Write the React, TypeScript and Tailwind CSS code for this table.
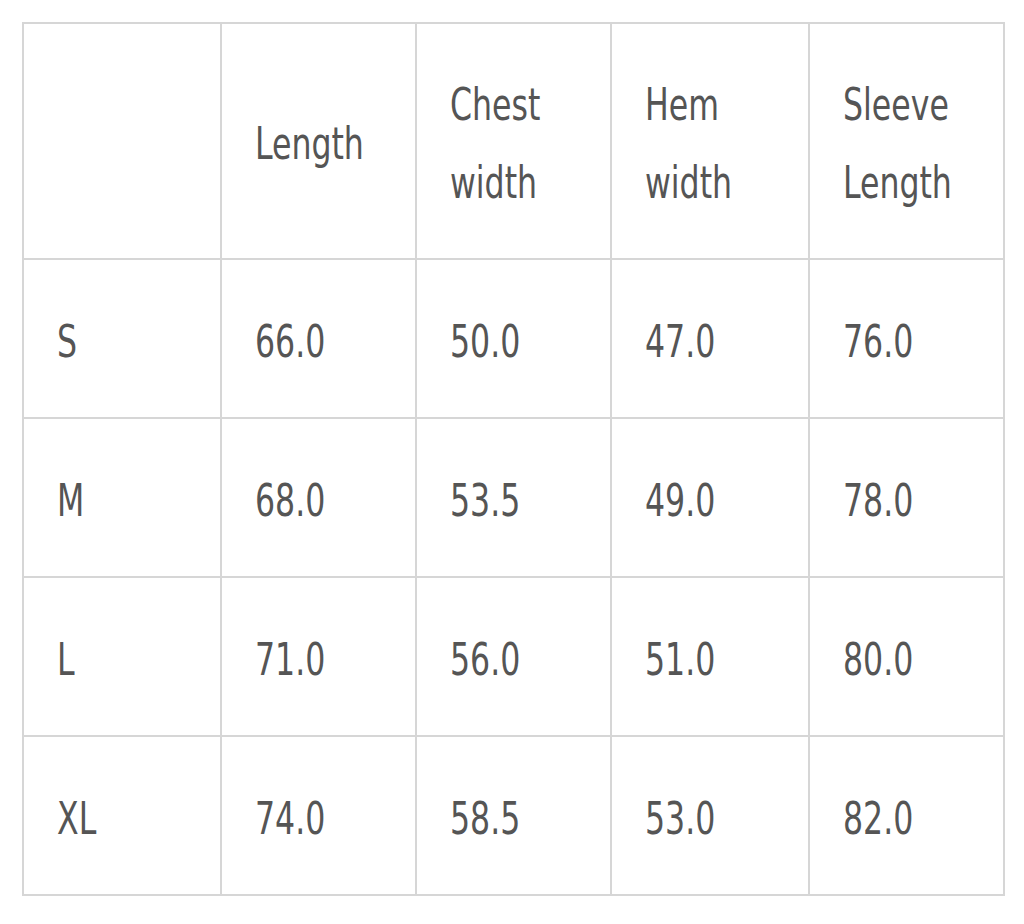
const headers = ["", "Length", "Chest width", "Hem width", "Sleeve Length"];

const rows = [
  ["S", "66.0", "50.0", "47.0", "76.0"],
  ["M", "68.0", "53.5", "49.0", "78.0"],
  ["L", "71.0", "56.0", "51.0", "80.0"],
  ["XL", "74.0", "58.5", "53.0", "82.0"],
];

const widths = ["w-[198px]", "w-[195px]", "w-[195px]", "w-[198px]", "w-[195px]"];

// condensed face squeezed a bit more to get close to the narrow display font
const Narrow = ({ children }: { children: React.ReactNode }) => (
  <span className="inline-block origin-left scale-x-[0.78] whitespace-nowrap">{children}</span>
);

export default function App() {
  return (
    <div className="min-h-[924px] bg-white pt-[22px] pl-[22px]">
      <table
        className="w-[981px] table-fixed border-collapse text-[#555] text-[45px]"
        style={{ fontFamily: '"DejaVu Sans Condensed", "Liberation Sans Narrow", sans-serif' }}
      >
        <colgroup>
          {widths.map((w, i) => (
            <col key={i} className={w} />
          ))}
        </colgroup>
        <thead>
          <tr className="h-[236px]">
            {headers.map((h, i) => (
              <th key={i} className="border-2 border-[#d6d6d6] pl-[33px] pr-2 pt-[6px] text-left align-middle font-normal leading-[78px]">
                {h.split(" ").map((word, j) => (
                  <div key={j}>
                    <Narrow>{word}</Narrow>
                  </div>
                ))}
              </th>
            ))}
          </tr>
        </thead>
        <tbody>
          {rows.map((row) => (
            <tr key={row[0]} className="h-[159px]">
              {row.map((cell, i) => (
                <td key={i} className="border-2 border-[#d6d6d6] pl-[33px] pt-[6px] align-middle leading-none">
                  <Narrow>{cell}</Narrow>
                </td>
              ))}
            </tr>
          ))}
        </tbody>
      </table>
    </div>
  );
}
